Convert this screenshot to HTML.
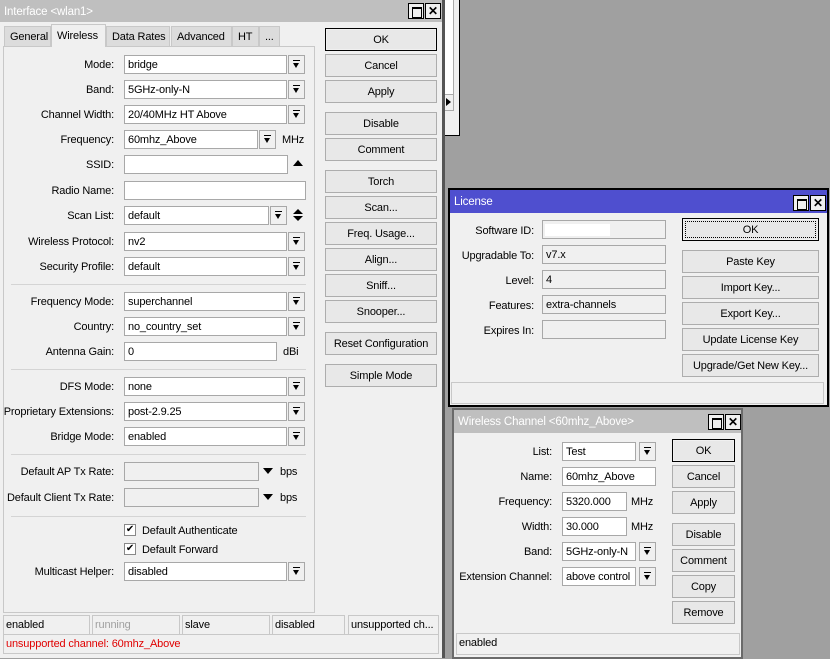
<!DOCTYPE html>
<html><head><meta charset="utf-8"><style>
*{box-sizing:border-box;margin:0;padding:0;white-space:nowrap}
body{width:830px;height:659px;background:#a0a0a0;position:relative;overflow:hidden;font-family:"Liberation Sans",sans-serif;font-size:11px;letter-spacing:-0.15px;color:#000}
.a{position:absolute}
.win{position:absolute;background:#f0f0f0;border:1px solid #000}
.tb{position:absolute;left:0;right:0;top:0;height:22px;background:#bfbfbf;color:#fff;font-size:11.5px;padding:6px 0 0 4px}
.wb{position:absolute;top:3px;width:16px;height:16px;border:1px solid #000;background:#f0f0f0;font-size:12px;font-weight:bold;text-align:center;line-height:14px;color:#000}
.wb.m::after{content:"";position:absolute;left:3px;top:3px;width:8px;height:8px;border:1px solid #000;border-top-width:2px}
.lbl{position:absolute;text-align:right}
.in{position:absolute;height:19px;background:#fff;border:1px solid #a8a8a8;padding:3px 0 0 3px;overflow:hidden}
.in.d{background:#f0f0f0}
.dd{position:absolute;width:17px;height:19px;border:1px solid #a8a8a8;background:#f0f0f0}
.dd::after{content:"";position:absolute;left:4px;top:4px;width:7px;height:1px;background:#000}
.dd::before{content:"";position:absolute;left:4px;top:7px;border-left:3.5px solid transparent;border-right:3.5px solid transparent;border-top:5px solid #000}
.btn{position:absolute;height:23px;border:1px solid #adadad;background:#e8e8e8;text-align:center;line-height:22px}
.btn.def{border:1px solid #000;box-shadow:inset 0 0 0 1px #f0f0f0}
.sep{position:absolute;height:1px;background:#d4d4d4}
.st{position:absolute;height:20px;border:1px solid #c8c8c8;padding:3px 0 0 2px;overflow:hidden}
.tab{position:absolute;top:26px;height:20px;background:#dcdcdc;border:1px solid #c8c8c8;border-bottom:none;padding:4px 0 0 5px;overflow:hidden}
.tri{position:absolute;border-left:5px solid transparent;border-right:5px solid transparent}
</style></head><body>

<div class="a" style="left:440px;top:0;width:20px;height:136px;background:#f0f0f0;border-right:1px solid #000;border-bottom:1px solid #000"></div>
<div class="a" style="left:444px;top:0;width:10px;height:95px;background:#fff;border-right:1px solid #aaa"></div>
<div class="a" style="left:444px;top:94px;width:10px;height:17px;border:1px solid #aaa;background:#f0f0f0"></div>
<div class="a" style="left:446px;top:98px;border-top:4px solid transparent;border-bottom:4px solid transparent;border-left:5px solid #000"></div>

<div class="win" style="left:0;top:0;width:445px;height:658px;border:none;border-right:3px solid #555">
<div class="tb">Interface &lt;wlan1&gt;</div>
<div class="wb m" style="left:408px"></div><div class="wb" style="left:425px">✕</div>
<div class="tab" style="left:4px;width:47px">General</div>
<div class="tab" style="left:51px;top:24px;height:23px;width:55px;background:#f0f0f0;z-index:2;padding-top:5px">Wireless</div>
<div class="tab" style="left:106px;width:64px">Data Rates</div>
<div class="tab" style="left:171px;width:61px">Advanced</div>
<div class="tab" style="left:232px;width:27px">HT</div>
<div class="tab" style="left:259px;width:21px">...</div>
<div class="a" style="left:3px;top:46px;width:312px;height:567px;border:1px solid #c8c8c8;background:#f0f0f0"></div>

<div class="lbl" style="right:328px;top:59px">Mode:</div><div class="in" style="left:124px;top:55px;width:163px">bridge</div><div class="dd" style="left:288px;top:55px"></div>
<div class="lbl" style="right:328px;top:84px">Band:</div><div class="in" style="left:124px;top:80px;width:163px">5GHz-only-N</div><div class="dd" style="left:288px;top:80px"></div>
<div class="lbl" style="right:328px;top:109px">Channel Width:</div><div class="in" style="left:124px;top:105px;width:163px">20/40MHz HT Above</div><div class="dd" style="left:288px;top:105px"></div>
<div class="lbl" style="right:328px;top:134px">Frequency:</div><div class="in" style="left:124px;top:130px;width:134px">60mhz_Above</div><div class="dd" style="left:259px;top:130px"></div><div class="a" style="left:282px;top:134px">MHz</div>
<div class="lbl" style="right:328px;top:159px">SSID:</div><div class="in" style="left:124px;top:155px;width:164px"></div><div class="tri" style="left:293px;top:160px;border-bottom:6px solid #000"></div>
<div class="lbl" style="right:328px;top:185px">Radio Name:</div><div class="in" style="left:124px;top:181px;width:182px"></div>
<div class="lbl" style="right:328px;top:210px">Scan List:</div><div class="in" style="left:124px;top:206px;width:145px">default</div><div class="dd" style="left:270px;top:206px"></div><div class="tri" style="left:293px;top:209px;border-bottom:5px solid #000"></div><div class="tri" style="left:293px;top:216px;border-top:5px solid #000"></div>
<div class="lbl" style="right:328px;top:236px">Wireless Protocol:</div><div class="in" style="left:124px;top:232px;width:163px">nv2</div><div class="dd" style="left:288px;top:232px"></div>
<div class="lbl" style="right:328px;top:261px">Security Profile:</div><div class="in" style="left:124px;top:257px;width:163px">default</div><div class="dd" style="left:288px;top:257px"></div>
<div class="sep" style="left:11px;top:284px;width:295px"></div>
<div class="lbl" style="right:328px;top:296px">Frequency Mode:</div><div class="in" style="left:124px;top:292px;width:163px">superchannel</div><div class="dd" style="left:288px;top:292px"></div>
<div class="lbl" style="right:328px;top:321px">Country:</div><div class="in" style="left:124px;top:317px;width:163px">no_country_set</div><div class="dd" style="left:288px;top:317px"></div>
<div class="lbl" style="right:328px;top:346px">Antenna Gain:</div><div class="in" style="left:124px;top:342px;width:153px">0</div><div class="a" style="left:283px;top:346px">dBi</div>
<div class="sep" style="left:11px;top:369px;width:295px"></div>
<div class="lbl" style="right:328px;top:381px">DFS Mode:</div><div class="in" style="left:124px;top:377px;width:163px">none</div><div class="dd" style="left:288px;top:377px"></div>
<div class="lbl" style="right:328px;top:406px">Proprietary Extensions:</div><div class="in" style="left:124px;top:402px;width:163px">post-2.9.25</div><div class="dd" style="left:288px;top:402px"></div>
<div class="lbl" style="right:328px;top:431px">Bridge Mode:</div><div class="in" style="left:124px;top:427px;width:163px">enabled</div><div class="dd" style="left:288px;top:427px"></div>
<div class="sep" style="left:11px;top:454px;width:295px"></div>
<div class="lbl" style="right:328px;top:466px">Default AP Tx Rate:</div><div class="in d" style="left:124px;top:462px;width:135px"></div><div class="tri" style="left:263px;top:468px;border-top:6px solid #000"></div><div class="a" style="left:280px;top:466px">bps</div>
<div class="lbl" style="right:328px;top:492px">Default Client Tx Rate:</div><div class="in d" style="left:124px;top:488px;width:135px"></div><div class="tri" style="left:263px;top:494px;border-top:6px solid #000"></div><div class="a" style="left:280px;top:492px">bps</div>
<div class="sep" style="left:11px;top:516px;width:295px"></div>
<div class="a" style="left:124px;top:524px;width:12px;height:12px;border:1px solid #888;background:#fff;font-size:10px;line-height:10px;text-align:center">✔</div><div class="a" style="left:142px;top:525px">Default Authenticate</div>
<div class="a" style="left:124px;top:543px;width:12px;height:12px;border:1px solid #888;background:#fff;font-size:10px;line-height:10px;text-align:center">✔</div><div class="a" style="left:142px;top:544px">Default Forward</div>
<div class="lbl" style="right:328px;top:566px">Multicast Helper:</div><div class="in" style="left:124px;top:562px;width:163px">disabled</div><div class="dd" style="left:288px;top:562px"></div>

<div class="btn def" style="left:325px;top:28px;width:112px">OK</div>
<div class="btn" style="left:325px;top:54px;width:112px">Cancel</div>
<div class="btn" style="left:325px;top:80px;width:112px">Apply</div>
<div class="btn" style="left:325px;top:112px;width:112px">Disable</div>
<div class="btn" style="left:325px;top:138px;width:112px">Comment</div>
<div class="btn" style="left:325px;top:170px;width:112px">Torch</div>
<div class="btn" style="left:325px;top:196px;width:112px">Scan...</div>
<div class="btn" style="left:325px;top:222px;width:112px">Freq. Usage...</div>
<div class="btn" style="left:325px;top:248px;width:112px">Align...</div>
<div class="btn" style="left:325px;top:274px;width:112px">Sniff...</div>
<div class="btn" style="left:325px;top:300px;width:112px">Snooper...</div>
<div class="btn" style="left:325px;top:332px;width:112px">Reset Configuration</div>
<div class="btn" style="left:325px;top:364px;width:112px">Simple Mode</div>

<div class="st" style="left:3px;top:615px;width:87px">enabled</div>
<div class="st" style="left:92px;top:615px;width:88px;color:#a0a0a0">running</div>
<div class="st" style="left:182px;top:615px;width:88px">slave</div>
<div class="st" style="left:272px;top:615px;width:73px">disabled</div>
<div class="st" style="left:348px;top:615px;width:91px">unsupported ch...</div>
<div class="st" style="left:3px;top:634px;width:436px;color:#e00000">unsupported channel: 60mhz_Above</div>
</div>

<div class="win" style="left:448px;top:188px;width:381px;height:219px;border:2px solid #000">
<div class="tb" style="background:#4f4fcf;height:23px;top:0">License</div>
<div class="wb m" style="left:343px;top:5px"></div><div class="wb" style="left:360px;top:5px">✕</div>
<div class="lbl" style="right:293px;top:35px">Software ID:</div><div class="in d" style="left:92px;top:30px;width:124px"><div style="position:absolute;left:2px;top:3px;width:65px;height:12px;background:#fff"></div></div>
<div class="lbl" style="right:293px;top:60px">Upgradable To:</div><div class="in d" style="left:92px;top:55px;width:124px">v7.x</div>
<div class="lbl" style="right:293px;top:85px">Level:</div><div class="in d" style="left:92px;top:80px;width:124px">4</div>
<div class="lbl" style="right:293px;top:110px">Features:</div><div class="in d" style="left:92px;top:105px;width:124px">extra-channels</div>
<div class="lbl" style="right:293px;top:135px">Expires In:</div><div class="in d" style="left:92px;top:130px;width:124px"></div>
<div class="btn def" style="left:232px;top:28px;width:137px;outline:1px dotted #000;outline-offset:-4px">OK</div>
<div class="btn" style="left:232px;top:60px;width:137px">Paste Key</div>
<div class="btn" style="left:232px;top:86px;width:137px">Import Key...</div>
<div class="btn" style="left:232px;top:112px;width:137px">Export Key...</div>
<div class="btn" style="left:232px;top:138px;width:137px">Update License Key</div>
<div class="btn" style="left:232px;top:164px;width:137px">Upgrade/Get New Key...</div>
<div class="st" style="left:1px;top:192px;width:373px;height:22px"></div>
</div>

<div class="win" style="left:452px;top:408px;width:291px;height:251px;border:2px solid #6a6a6a">
<div class="tb" style="height:23px;top:0">Wireless Channel &lt;60mhz_Above&gt;</div>
<div class="wb m" style="left:254px;top:4px"></div><div class="wb" style="left:271px;top:4px">✕</div>
<div class="lbl" style="right:189px;top:36px">List:</div><div class="in" style="left:108px;top:32px;width:74px">Test</div><div class="dd" style="left:185px;top:32px"></div>
<div class="lbl" style="right:189px;top:61px">Name:</div><div class="in" style="left:108px;top:57px;width:94px">60mhz_Above</div>
<div class="lbl" style="right:189px;top:86px">Frequency:</div><div class="in" style="left:108px;top:82px;width:65px">5320.000</div><div class="a" style="left:177px;top:86px">MHz</div>
<div class="lbl" style="right:189px;top:111px">Width:</div><div class="in" style="left:108px;top:107px;width:65px">30.000</div><div class="a" style="left:177px;top:111px">MHz</div>
<div class="lbl" style="right:189px;top:136px">Band:</div><div class="in" style="left:108px;top:132px;width:74px">5GHz-only-N</div><div class="dd" style="left:185px;top:132px"></div>
<div class="lbl" style="right:189px;top:161px">Extension Channel:</div><div class="in" style="left:108px;top:157px;width:74px">above control</div><div class="dd" style="left:185px;top:157px"></div>
<div class="btn def" style="left:218px;top:29px;width:63px">OK</div>
<div class="btn" style="left:218px;top:55px;width:63px">Cancel</div>
<div class="btn" style="left:218px;top:81px;width:63px">Apply</div>
<div class="btn" style="left:218px;top:113px;width:63px">Disable</div>
<div class="btn" style="left:218px;top:139px;width:63px">Comment</div>
<div class="btn" style="left:218px;top:165px;width:63px">Copy</div>
<div class="btn" style="left:218px;top:191px;width:63px">Remove</div>
<div class="st" style="left:2px;top:223px;width:284px;height:22px">enabled</div>
</div>
</body></html>
